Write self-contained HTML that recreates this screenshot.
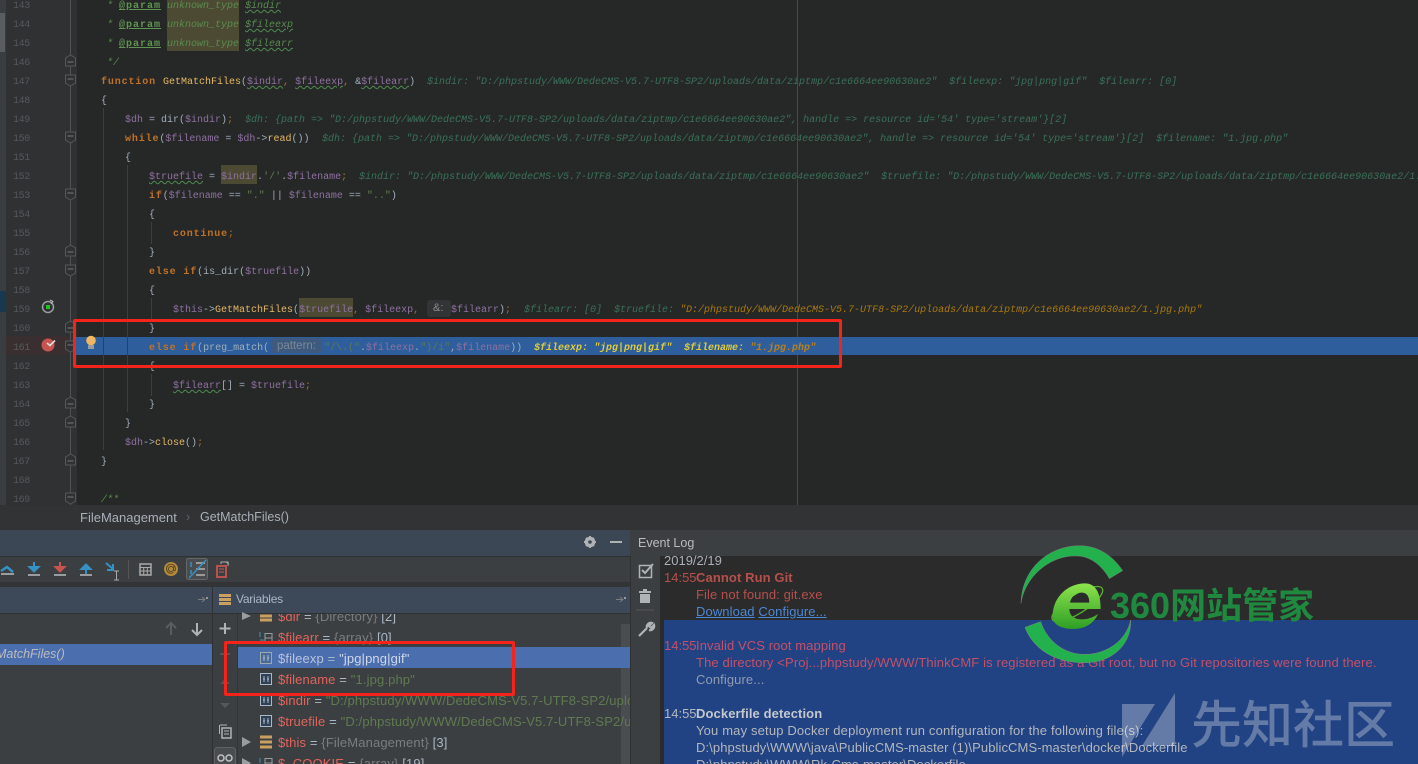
<!DOCTYPE html>
<html><head><meta charset="utf-8"><style>
html,body{margin:0;padding:0;background:#262828;width:1418px;height:764px;overflow:hidden}
#r{position:relative;width:1418px;height:764px;overflow:hidden;font-family:"Liberation Sans",sans-serif}
.a{position:absolute}
.l,.n{position:absolute;height:19px;line-height:19px;font:10px/19px "Liberation Mono",monospace;white-space:pre;color:#9fadbb;transform:translateY(1px)}
.n{left:13px;color:#55585a;letter-spacing:-.4px}
.v{color:#8f70a0}.k{color:#c07228;font-weight:bold;letter-spacing:.87px}.f{color:#e6b865}.s{color:#5f7a50}.c{color:#5a8c4e;font-style:italic}
.p{color:#5f9452;font-weight:bold;letter-spacing:1px;text-decoration:underline}
.o{color:#b06a2a}
.h{color:#3a7058;font-style:italic}.w{text-decoration:underline wavy #4f8a4f 1px}
.hl{background:#4c4a33}
.t{position:absolute;font-size:12.5px;line-height:17px;white-space:pre;color:#a9b7c6}
.e{position:absolute;left:696px;font-size:13px;letter-spacing:.1px;line-height:17px;white-space:pre;color:#b4b8bc}
.m{position:absolute;left:664px;font-size:13px;line-height:17px;color:#b5504c}
.x{color:#e0645c}.g{color:#7a7d80}
.vr{font-size:13px;letter-spacing:.13px}
</style></head><body><div id="r">
<div class="a" style="left:0;top:0;width:6px;height:505px;background:#3a3d40"></div>
<div class="a" style="left:0;top:13px;width:5px;height:39px;background:#5a5d5f"></div>
<div class="a" style="left:0;top:291px;width:6px;height:21px;background:#17384f"></div>
<div class="a" style="left:6px;top:0;width:71px;height:505px;background:#2f3133"></div>
<div class="a" style="left:6px;top:336px;width:71px;height:19px;background:#3a2f30"></div>
<div class="a" style="left:70px;top:0;width:1px;height:505px;background:#505356"></div>
<div class="a" style="left:797px;top:0;width:1px;height:505px;background:#45484a"></div>
<div class="a" style="left:74px;top:337px;width:1344px;height:18px;background:#2e5e9c"></div>
<div class="a" style="left:103px;top:108px;width:1px;height:342px;background:#3c3f41"></div>
<div class="a" style="left:127px;top:165px;width:1px;height:247px;background:#3c3f41"></div>
<div class="a" style="left:151px;top:222px;width:1px;height:22px;background:#3c3f41"></div>
<div class="a" style="left:151px;top:298px;width:1px;height:22px;background:#3c3f41"></div>
<div class="a" style="left:151px;top:374px;width:1px;height:22px;background:#3c3f41"></div>

<span class="n" style="top:-4px">143</span><span class="n" style="top:15px">144</span><span class="n" style="top:34px">145</span><span class="n" style="top:53px">146</span><span class="n" style="top:72px">147</span><span class="n" style="top:91px">148</span><span class="n" style="top:110px">149</span><span class="n" style="top:129px">150</span><span class="n" style="top:148px">151</span><span class="n" style="top:167px">152</span><span class="n" style="top:186px">153</span><span class="n" style="top:205px">154</span><span class="n" style="top:224px">155</span><span class="n" style="top:243px">156</span><span class="n" style="top:262px">157</span><span class="n" style="top:281px">158</span><span class="n" style="top:300px">159</span><span class="n" style="top:319px">160</span><span class="n" style="top:338px">161</span><span class="n" style="top:357px">162</span><span class="n" style="top:376px">163</span><span class="n" style="top:395px">164</span><span class="n" style="top:414px">165</span><span class="n" style="top:433px">166</span><span class="n" style="top:452px">167</span><span class="n" style="top:471px">168</span><span class="n" style="top:490px">169</span>

<div class="a hl" style="left:167px;top:0;width:72px;height:51px"></div>
<div class="a hl" style="left:221px;top:165px;width:36px;height:19px"></div>
<div class="a hl" style="left:299px;top:298px;width:54px;height:19px"></div>

<div class="l" style="left:107px;top:-4px"><span class="c">*</span> <span class="p" style="position:absolute;left:12px">@param</span><span class="c" style="position:absolute;left:60px">unknown_type</span><span class="c w" style="position:absolute;left:138px">$indir</span></div>
<div class="l" style="left:107px;top:15px"><span class="c">*</span> <span class="p" style="position:absolute;left:12px">@param</span><span class="c" style="position:absolute;left:60px">unknown_type</span><span class="c w" style="position:absolute;left:138px">$fileexp</span></div>
<div class="l" style="left:107px;top:34px"><span class="c">*</span> <span class="p" style="position:absolute;left:12px">@param</span><span class="c" style="position:absolute;left:60px">unknown_type</span><span class="c w" style="position:absolute;left:138px">$filearr</span></div>
<div class="l c" style="left:107px;top:53px">*/</div>
<div class="l" style="left:101px;top:72px"><span class="k">function</span><span class="a" style="left:62px"><span class="f">GetMatchFiles</span>(<span class="v w">$indir</span><span class="o">,</span> <span class="v w">$fileexp</span><span class="o">,</span> &amp;<span class="v w">$filearr</span>)</span></div>
<div class="l h" style="left:427px;top:72px">$indir: "D:/phpstudy/WWW/DedeCMS-V5.7-UTF8-SP2/uploads/data/ziptmp/c1e6664ee90630ae2"  $fileexp: "jpg|png|gif"  $filearr: [0]</div>
<div class="l" style="left:101px;top:91px">{</div>
<div class="l" style="left:125px;top:110px"><span class="v">$dh</span> = dir(<span class="v">$indir</span>)<span class="o">;</span></div>
<div class="l h" style="left:245px;top:110px">$dh: {path =&gt; "D:/phpstudy/WWW/DedeCMS-V5.7-UTF8-SP2/uploads/data/ziptmp/c1e6664ee90630ae2", handle =&gt; resource id='54' type='stream'}[2]</div>
<div class="l" style="left:125px;top:129px"><span class="k">while</span>(<span class="v">$filename</span> = <span class="v">$dh</span>-&gt;<span class="f">read</span>())</div>
<div class="l h" style="left:322px;top:129px">$dh: {path =&gt; "D:/phpstudy/WWW/DedeCMS-V5.7-UTF8-SP2/uploads/data/ziptmp/c1e6664ee90630ae2", handle =&gt; resource id='54' type='stream'}[2]  $filename: "1.jpg.php"</div>
<div class="l" style="left:125px;top:148px">{</div>
<div class="l" style="left:149px;top:167px"><span class="v"><span class="w">$truefile</span></span> = <span class="v">$indir</span>.<span class="s">'/'</span>.<span class="v">$filename</span><span class="o">;</span></div>
<div class="l h" style="left:359px;top:167px">$indir: "D:/phpstudy/WWW/DedeCMS-V5.7-UTF8-SP2/uploads/data/ziptmp/c1e6664ee90630ae2"  $truefile: "D:/phpstudy/WWW/DedeCMS-V5.7-UTF8-SP2/uploads/data/ziptmp/c1e6664ee90630ae2/1.jpg.php"</div>
<div class="l" style="left:149px;top:186px"><span class="k">if</span>(<span class="v">$filename</span> == <span class="s">"."</span> || <span class="v">$filename</span> == <span class="s">".."</span>)</div>
<div class="l" style="left:149px;top:205px">{</div>
<div class="l" style="left:173px;top:224px"><span class="k">continue</span><span class="o">;</span></div>
<div class="l" style="left:149px;top:243px">}</div>
<div class="l" style="left:149px;top:262px"><span class="k">else if</span>(is_dir(<span class="v">$truefile</span>))</div>
<div class="l" style="left:149px;top:281px">{</div>
<div class="l" style="left:173px;top:300px"><span class="v">$this</span>-&gt;<span class="f">GetMatchFiles</span>(<span class="v">$truefile</span><span class="o">,</span> <span class="v">$fileexp</span><span class="o">,</span></div>
<div class="a" style="left:427px;top:300px;width:24px;height:17px;background:#323436;border-radius:3px"></div>
<div class="a" style="left:433px;top:300px;font-size:11px;line-height:17px;color:#8a8d8f">&amp;:</div>
<div class="l" style="left:451px;top:300px"><span class="v">$filearr</span>)<span class="o">;</span></div>
<div class="l" style="left:524px;top:300px"><span class="h">$filearr: [0]  $truefile: </span><span style="color:#a9780f;font-style:italic">"D:/phpstudy/WWW/DedeCMS-V5.7-UTF8-SP2/uploads/data/ziptmp/c1e6664ee90630ae2/1.jpg.php"</span></div>
<div class="l" style="left:149px;top:319px">}</div>
<div class="l" style="left:149px;top:338px"><span class="k">else if</span>(preg_match(</div>
<div class="a" style="left:271px;top:338px;width:51px;height:15px;background:#3e5a7e;border-radius:4px"></div>
<div class="a" style="left:277px;top:339px;font-size:11.5px;line-height:15px;color:#7b8796">pattern:</div>
<div class="l" style="left:324px;top:338px"><span class="s">"/\.("</span>.<span class="v">$fileexp</span>.<span class="s">")/i"</span>,<span class="v">$filename</span>))</div>
<div class="l" style="left:534px;top:338px;font-weight:bold;font-style:italic"><span style="color:#dfcb3a">$fileexp: "jpg|png|gif"  $filename: </span><span style="color:#b8801c">"1.jpg.php"</span></div>
<div class="l" style="left:149px;top:357px">{</div>
<div class="l" style="left:173px;top:376px"><span class="v w">$filearr</span>[] = <span class="v">$truefile</span><span class="o">;</span></div>
<div class="l" style="left:149px;top:395px">}</div>
<div class="l" style="left:125px;top:414px">}</div>
<div class="l" style="left:125px;top:433px"><span class="v">$dh</span>-&gt;<span class="f">close</span>()<span class="o">;</span></div>
<div class="l" style="left:101px;top:452px">}</div>
<div class="l c" style="left:101px;top:490px">/**</div>

<svg class="a" style="left:0;top:0" width="110" height="505" fill="none">
<defs><g id="fd"><path d="M-5 -5H5V3L0 6L-5 3Z" fill="#2f3133" stroke="#55585a"/><path d="M-3 -1H3" stroke="#777"/></g><g id="fu"><path d="M-5 5H5V-3L0 -6L-5 -3Z" fill="#2f3133" stroke="#55585a"/><path d="M-3 1H3" stroke="#777"/></g></defs>
<use href="#fu" x="70.5" y="61"/><use href="#fd" x="70.5" y="80"/><use href="#fd" x="70.5" y="137"/><use href="#fd" x="70.5" y="194"/><use href="#fu" x="70.5" y="251"/><use href="#fd" x="70.5" y="270"/><use href="#fu" x="70.5" y="327"/><use href="#fd" x="70.5" y="346"/><use href="#fu" x="70.5" y="403"/><use href="#fu" x="70.5" y="422"/><use href="#fu" x="70.5" y="460"/><use href="#fd" x="70.5" y="498"/>
<circle cx="48" cy="307" r="5.5" stroke="#9a9d9f" stroke-width="1.5"/><rect x="46" y="305" width="4" height="4" fill="#1fc01f"/><path d="M50 300l3 1.5-2 2.5" stroke="#bbb"/>
<circle cx="48" cy="345" r="6.5" fill="#c75450"/><path d="M47 343l3 2.5 5-5" stroke="#ddd" stroke-width="1.6"/>
<circle cx="91" cy="340.500" r="4.800" fill="#f2b75e"/><rect x="88" y="345" width="6" height="4" fill="#9a9d9f"/>
</svg>
<div class="a" style="left:73px;top:319px;width:763px;height:43px;border:3px solid #f4241a;border-radius:2px"></div>

<!-- breadcrumb -->
<div class="a" style="left:0;top:505px;width:1418px;height:25px;background:#313335"></div>
<div class="t" style="left:80px;top:509px;font-size:13px;color:#a9b0b8">FileManagement</div>
<div class="t" style="left:186px;top:509px;color:#606366">›</div>
<div class="t" style="left:200px;top:509px;color:#a9b0b8">GetMatchFiles()</div>

<!-- debug panel -->
<div class="a" style="left:0;top:530px;width:630px;height:26px;background:#3c4756"></div>
<div class="a" style="left:630px;top:530px;width:788px;height:26px;background:#3c3f41"></div>
<div class="a" style="left:0;top:556px;width:630px;height:26px;background:#3c3f41;border-top:1px solid #2f3133;box-sizing:border-box"></div>
<div class="a" style="left:0;top:582px;width:630px;height:5px;background:#323436"></div>
<div class="a" style="left:0;top:587px;width:630px;height:27px;background:#3d4859;border-bottom:1px solid #2f3133;box-sizing:border-box"></div>
<div class="a" style="left:0;top:614px;width:630px;height:150px;background:#3c3f41"></div>
<div class="a" style="left:212px;top:587px;width:1px;height:177px;background:#2f3133"></div>
<div class="a" style="left:237px;top:614px;width:1px;height:150px;background:#333537"></div>
<div class="a" style="left:0;top:644px;width:212px;height:21px;background:#4b6eaf"></div>
<div class="t" style="left:-4px;top:646px;color:#bbb;font-style:italic">MatchFiles()</div>
<div class="a" style="left:621px;top:624px;width:9px;height:140px;background:#4a4d4f"></div>
<div class="a" style="left:238px;top:647px;width:392px;height:21px;background:#4b6eaf"></div>
<div class="t" style="left:236px;top:591px;font-size:12px;letter-spacing:-.25px;color:#a9b7c6">Variables</div>
<div class="t" style="left:638px;top:535px;color:#bbb">Event Log</div>

<div class="a" style="left:238px;top:614px;width:392px;height:150px;overflow:hidden">
<div class="t vr" style="left:40px;top:-6px"><span class="x">$dir</span> = <span class="g">{Directory}</span> [2]</div>
<div class="t vr" style="left:40px;top:15px"><span class="x">$filearr</span> = <span class="g">{array}</span> [0]</div>
<div class="t vr" style="left:40px;top:36px"><span style="color:#b8c4dc">$fileexp</span> = <span style="color:#d0d8e8">"jpg|png|gif"</span></div>
<div class="t vr" style="left:40px;top:57px"><span class="x">$filename</span> = <span class="s">"1.jpg.php"</span></div>
<div class="t vr" style="left:40px;top:78px"><span class="x">$indir</span> = <span class="s">"D:/phpstudy/WWW/DedeCMS-V5.7-UTF8-SP2/uploads/data/ziptmp</span></div>
<div class="t vr" style="left:40px;top:99px"><span class="x">$truefile</span> = <span class="s">"D:/phpstudy/WWW/DedeCMS-V5.7-UTF8-SP2/uploads/data/ziptmp</span></div>
<div class="t vr" style="left:40px;top:120px"><span class="x">$this</span> = <span class="g">{FileManagement}</span> [3]</div>
<div class="t vr" style="left:40px;top:141px"><span class="x">$_COOKIE</span> = <span class="g">{array}</span> [19]</div>
</div>

<svg class="a" style="left:0;top:530px" width="630" height="234" fill="none">
<path d="M1 41l6-4 6 5" stroke="#3592c4" stroke-width="2.500"/><path d="M1 44h13" stroke="#9a9d9f" stroke-width="2"/>
<path d="M34 32v7M29.500 37h9L34 41.500Z" stroke="#3592c4" stroke-width="2" fill="#3592c4"/><path d="M28 45h12" stroke="#9a9d9f" stroke-width="2"/>
<path d="M60 32v7M55.500 37h9L60 41.500Z" stroke="#c75450" stroke-width="2" fill="#c75450"/><path d="M54 45h12" stroke="#9a9d9f" stroke-width="2"/>
<path d="M86 44v-7M81.500 39h9L86 34.500Z" stroke="#3592c4" stroke-width="2" fill="#3592c4"/><path d="M80 45h12" stroke="#9a9d9f" stroke-width="2"/>
<path d="M106 33l7 6M113 34v6h-6" stroke="#3592c4" stroke-width="2"/><path d="M114 41h5M116.500 41v9M114 50h5" stroke="#aaa"/>
<path d="M128.500 30v19" stroke="#555"/>
<rect x="140" y="34" width="11" height="11" stroke="#aaa" stroke-width="1.500"/><path d="M140 37.500h11M143.700 38v7M147.300 38v7M140 41h11" stroke="#aaa"/>
<circle cx="171" cy="39" r="7" fill="#b48a3c"/><circle cx="171" cy="39" r="2.500" stroke="#5a4a22"/><path d="M173.500 36.500v4q2 1 2-1.500a4.500 4.500 0 1 0-2 3.500" stroke="#5a4a22"/>
<rect x="186.500" y="28.500" width="21" height="21" rx="2" fill="#4a4d50" stroke="#666"/><path d="M196 33h9M196 39h9M196 45h9" stroke="#999" stroke-width="2"/><path d="M189 48l17-18" stroke="#3592c4" stroke-width="1.500"/><path d="M191 32v5M191 40v4" stroke="#3592c4" stroke-width="1.500"/>
<rect x="217" y="36" width="9" height="11" stroke="#c75450" stroke-width="1.800"/><path d="M219 39h5M219 42h5" stroke="#c75450"/><path d="M221 34v-2h7v4M226 32l3 2" stroke="#aaa"/>
<circle cx="590" cy="12" r="3.800" stroke="#b0b3b5" stroke-width="3"/><path d="M590 6v12M584 12h12M586 8l8 8M594 8l-8 8" stroke="#b0b3b5" stroke-width="2"/><circle cx="590" cy="12" r="1.800" fill="#3c4756"/>
<path d="M610 12h12" stroke="#b0b3b5" stroke-width="2"/>
<path d="M198 69.500h6M202 67l3 2.500-3 2.500" stroke="#7a7d80"/><rect x="206" y="67" width="2" height="2" fill="#999"/>
<path d="M616 69.500h6M620 67l3 2.500-3 2.500" stroke="#7a7d80"/><rect x="624" y="67" width="2" height="2" fill="#999"/>
<path d="M219 65.500h12M219 69.500h12M219 73.500h12" stroke="#c9a05f" stroke-width="3"/>
<path d="M171 93v12M166 98l5-5 5 5" stroke="#5a5d5f" stroke-width="2"/>
<path d="M197 93v12M192 100l5 5 5-5" stroke="#b0b3b5" stroke-width="2"/>
<path d="M225 93v11M219.500 98.500h11" stroke="#b0b3b5" stroke-width="2"/>
<path d="M220 124h10" stroke="#55585a" stroke-width="2"/>
<path d="M220 154l5-5 5 5Z" fill="#55585a"/><path d="M220 173l5 5 5-5Z" fill="#55585a"/>
<rect x="222" y="198" width="9" height="10" fill="#3c3f41" stroke="#b0b3b5" stroke-width="1.500"/><path d="M220 195h7" stroke="#b0b3b5"/><path d="M219.500 195v9" stroke="#b0b3b5"/><path d="M224 201h5M224 204h5" stroke="#b0b3b5"/>
<rect x="214.500" y="217.500" width="21" height="20" rx="3" fill="#4a4d50" stroke="#5e6163"/><circle cx="221" cy="228" r="3" stroke="#c0c3c5" stroke-width="1.500"/><circle cx="229" cy="228" r="3" stroke="#c0c3c5" stroke-width="1.500"/>
<path d="M242 82l9 4-9 4Z" fill="#9a9d9f"/><path d="M242 207l9 5-9 5Z" fill="#9a9d9f"/><path d="M242 228l9 5-9 5Z" fill="#9a9d9f"/>
<path d="M260 82h12M260 86h12" stroke="#c9a05f" stroke-width="3" transform="translate(0 4)"/>
<path d="M260 207h12M260 212h12M260 217h12" stroke="#c9a05f" stroke-width="3"/>
<g stroke="#9a9d9f"><path d="M265 103.500h7v9h-7ZM265 108h7"/><path d="M260 102v5M260 110h3v3h-3" stroke="#3592c4"/></g>
<g stroke="#9a9d9f"><path d="M265 228.500h7v9h-7ZM265 233h7"/><path d="M260 228v5M260 235h3v3h-3" stroke="#3592c4"/></g>
<g stroke="#a9b7c6" stroke-width="1"><rect x="260.500" y="122.500" width="11" height="11" fill="#4a6a9a" stroke="#9aa"/><rect x="260.500" y="143.500" width="11" height="11" fill="#2f4152"/><rect x="260.500" y="164.500" width="11" height="11" fill="#2f4152"/><rect x="260.500" y="185.500" width="11" height="11" fill="#2f4152"/><path d="M264 125v6M268 125v6M263 128h2M267 128h2M264 146v6M268 146v6M263 149h2M267 149h2M264 167v6M268 167v6M263 170h2M267 170h2M264 188v6M268 188v6M263 191h2M267 191h2"/></g>
</svg>

<!-- event log -->
<div class="a" style="left:630px;top:556px;width:30px;height:208px;background:#3c3f41;border-left:1px solid #2f3133;box-sizing:border-box"></div>
<div class="a" style="left:660px;top:556px;width:758px;height:208px;background:#2b2b2b"></div>
<div class="a" style="left:664px;top:620px;width:754px;height:144px;background:#214283"></div>
<svg class="a" style="left:630px;top:556px" width="30" height="90" fill="none">
<path d="M9.500 9.500h12v12h-12Z" stroke="#b0b3b5" stroke-width="1.500"/><path d="M12 14l3 3 8-9" stroke="#b0b3b5" stroke-width="2"/>
<path d="M9 36h12" stroke="#b0b3b5" stroke-width="2"/><rect x="13" y="33" width="4" height="2" fill="#b0b3b5"/><path d="M10 38h10v9H10Z" fill="#b0b3b5"/>
<path d="M6 47h18" stroke="#555" transform="translate(0 7)"/>
<path d="M9 80l8-8M17 72a4 4 0 0 1 5-5l-3 3 2 2 3-3a4 4 0 0 1-5 5" stroke="#b0b3b5" stroke-width="2.200"/>
</svg>
<div class="t" style="left:664px;top:552px;font-size:13px;color:#a9b0b8">2019/2/19</div>
<div class="m" style="top:569px">14:55</div><div class="e" style="top:569px;font-weight:bold;color:#b5504c">Cannot Run Git</div>
<div class="e" style="top:586px;color:#b5504c">File not found: git.exe</div>
<div class="e" style="top:603px;color:#4a88d8"><u>Download</u> <u>Configure...</u></div>
<div class="m" style="top:637px;color:#c45068">14:55</div><div class="e" style="top:637px;color:#c45068">Invalid VCS root mapping</div>
<div class="e" style="top:654px;letter-spacing:.13px;color:#c45068">The directory &lt;Proj...phpstudy/WWW/ThinkCMF is registered as a Git root, but no Git repositories were found there.</div>
<div class="e" style="top:671px;color:#8f9bb0">Configure...</div>
<div class="m" style="top:705px;color:#b4b8bc">14:55</div><div class="e" style="top:705px;font-weight:bold;color:#c4c8cc">Dockerfile detection</div>
<div class="e" style="top:722px;letter-spacing:.16px">You may setup Docker deployment run configuration for the following file(s):</div>
<div class="e" style="top:739px;letter-spacing:.09px">D:\phpstudy\WWW\java\PublicCMS-master (1)\PublicCMS-master\docker\Dockerfile</div>
<div class="e" style="top:756px">D:\phpstudy\WWW\Rk-Cms-master\Dockerfile</div>

<!-- red box vars -->
<div class="a" style="left:224px;top:641px;width:285px;height:49px;border:3px solid #f4241a;border-radius:2px"></div>

<!-- watermarks -->
<svg class="a" style="left:1010px;top:540px" width="140" height="130" viewBox="0 0 420 390" fill="none">
<defs><linearGradient id="eg" x1="0" y1="0" x2="0" y2="1"><stop offset="0" stop-color="#8ce44c"/><stop offset="1" stop-color="#2f9e26"/></linearGradient></defs>
<path d="M338 92C300 35 250 16 205 17C110 20 35 90 33 190C45 110 120 45 200 48C240 48 275 75 298 116Z" fill="#22b14c" stroke="#7a7d7a" stroke-width="1.500"/>
<path d="M45 262L92 245C110 300 160 342 220 343C290 345 350 300 362 240C365 310 310 368 225 368C140 370 70 330 45 262Z" fill="#22b14c" stroke="#858885" stroke-width="1.500"/>
<ellipse cx="202" cy="192" rx="88" ry="28" transform="rotate(-32 202 192)" stroke="#58b030" stroke-width="4"/>
<path fill-rule="evenodd" fill="url(#eg)" d="M128 228C128 170 175 130 225 130C255 130 272 155 272 207L178 207C178 228 195 238 215 238C235 238 250 232 264 222C252 250 225 267 190 267C155 267 128 255 128 228ZM180 188C184 168 200 158 215 158C232 158 238 172 238 188Z"/>
</svg>
<div class="a" style="left:1110px;top:586px;font:bold 36px/40px 'Liberation Sans','Noto Sans CJK SC',sans-serif;color:#1f8a3f;white-space:pre">360网站管家</div>
<svg class="a" style="left:1120px;top:690px" width="60" height="76"><path d="M2 14H35L2 67ZM55 3V56H22Z" fill="#fff" fill-opacity=".3"/></svg>
<div class="a" style="left:1191px;top:696px;font:500 51px/60px 'Liberation Sans','Noto Sans CJK SC',sans-serif;color:rgba(255,255,255,.3);white-space:pre">先知社区</div>
</div></body></html>
